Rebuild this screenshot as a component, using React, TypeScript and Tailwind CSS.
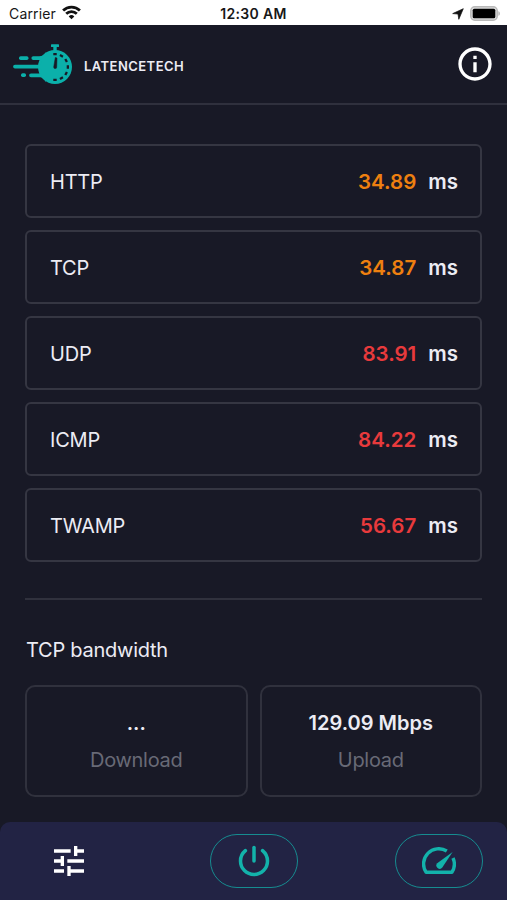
import { MdInfoOutline, MdTune } from 'react-icons/md'

const protocols = [
  { name: 'HTTP', value: '34.89', color: 'text-[#ee8010]' },
  { name: 'TCP', value: '34.87', color: 'text-[#ee8010]' },
  { name: 'UDP', value: '83.91', color: 'text-[#e83a3c]' },
  { name: 'ICMP', value: '84.22', color: 'text-[#e83a3c]' },
  { name: 'TWAMP', value: '56.67', color: 'text-[#e83a3c]' },
]

const bandwidth = [
  { label: 'Download', value: '...' },
  { label: 'Upload', value: '129.09 Mbps' },
]

function Logo() {
  return (
    <svg width="60" height="42" viewBox="0 0 60 42" fill="none">
      <g fill="#0bb0aa">
        <rect x="38" y="1.2" width="8" height="2.8" rx=".6" />
        <rect x="40.3" y="3" width="3.4" height="5" />
        <circle cx="42" cy="24" r="17" />
        <path d="M20.3 13.2H26c3.5 0 5-1.5 7-4v30c-2-3.500-3.500-5-7-5h-8a1.900 1.900 0 0 1 0-3.800h8.500c2.500 0 2.500-4.900 0-4.900H2a1.900 1.900 0 0 1 0-3.800h24.500c2.500 0 2.500-4.700 0-4.700h-6.200a1.900 1.900 0 0 1 0-3.800z" />
        <rect x="6" y="13.2" width="9.5" height="3.8" rx="1.7" />
        <rect x="8" y="30.2" width="5" height="3.8" rx="1.7" />
      </g>
      <path d="M42.300 14.500l1.700.5-.3 9.200a1.500 1.500 0 0 1-3-.2z" fill="#181926" stroke="#181926" strokeWidth=".5" />
      <path
        d="M42 10v2.300M49 11.900l-1.100 2M54.100 17l-2 1.100M56 24h-2.300M54.100 31l-2-1.100M49 36.100l-1.100-2M42 38v-2.300"
        stroke="#181926"
        strokeWidth="3.4"
      />
    </svg>
  )
}

function StatusBar() {
  return (
    <div className="grid h-[25px] grid-cols-3 items-center bg-white text-[#171717]">
      <div className="flex items-center gap-[6px] pl-[9px]">
        <span className="pt-[2px] text-[14px] leading-none tracking-[0.15px]">Carrier</span>
        <svg width="19" height="15" viewBox="0 0 19 15" fill="none" stroke="#111" strokeWidth="2.8">
          <path d="M1.1 5.500a12 12 0 0 1 16.800 0" />
          <path d="M4.200 8.800a7.500 7.500 0 0 1 10.600 0" />
          <path d="M9.500 14.300l-2.800-2.900a4 4 0 0 1 5.600 0z" fill="#111" stroke="none" />
        </svg>
      </div>
      <div className="pt-[2px] text-center text-[14px] leading-none font-semibold tracking-[0.3px]">12:30 AM</div>
      <div className="flex items-center justify-end gap-[6px] pt-[2px] pr-[6px]">
        <svg width="12" height="12" viewBox="0 0 12 12" fill="#111" stroke="#111" strokeWidth=".7" strokeLinejoin="round">
          <path d="M11.300.7L6.800 11.300 6 6 .7 5.600z" />
        </svg>
        <svg width="31" height="15" viewBox="0 0 31 15">
          <rect x=".8" y=".8" width="26.4" height="13.4" rx="4" fill="#ddd" stroke="#b9b9b9" strokeWidth="1.5" />
          <rect x="2.7" y="2.7" width="22.6" height="9.6" rx="1.6" fill="#000" />
          <path d="M28.400 5.200c2 .6 2 4 0 4.600z" fill="#b5b5b5" />
        </svg>
      </div>
    </div>
  )
}

function PowerIcon() {
  return (
    <svg width="36" height="36" viewBox="0 0 512 512" fill="none" stroke="#13b2aa" strokeWidth="50" strokeLinecap="round">
      <path d="M378 108a191.41 191.41 0 0 1 70 148c0 106-86 192-192 192S64 362 64 256a192 192 0 0 1 69-148" />
      <path d="M256 64v192" />
    </svg>
  )
}

function GaugeIcon() {
  return (
    <svg width="34" height="28" viewBox="0 0 34 28" fill="none">
      <path
        d="M24.800 4A15.200 15.200 0 0 0 4.100 25.300H29.900A15.200 15.200 0 0 0 31 11"
        stroke="#13b2aa"
        strokeWidth="3.4"
        strokeLinejoin="round"
      />
      <path d="M30.600 4.900L20.300 20.500a3.300 3.300 0 0 1-5.100-4.300z" fill="#13b2aa" />
    </svg>
  )
}

export default function App() {
  return (
    <div className="flex h-[900px] w-[507px] flex-col overflow-hidden bg-[#181926] font-['Inter',sans-serif] text-[#ececf4]">
      <StatusBar />
      <header className="flex h-20 items-center justify-between border-b-2 border-[#2f303d] pr-[12px] pl-[13px]">
        <div className="flex items-center">
          <Logo />
          <span className="ml-[11px] pt-[5px] text-[13px] leading-none font-semibold tracking-[0.45px]">LATENCETECH</span>
        </div>
        <MdInfoOutline size={40} className="text-white" />
      </header>

      <main className="flex flex-1 flex-col px-[25px] pt-[39px]">
        <div className="flex flex-col gap-3">
          {protocols.map((item) => (
            <div
              key={item.name}
              className="flex h-[74px] items-center justify-between rounded-md border-2 border-[#353642] pt-[2px] pr-[22px] pl-[23px]"
            >
              <span className="text-[20px] tracking-[-0.2px]">{item.name}</span>
              <div className="flex items-center gap-[12px] text-[20.5px] font-semibold">
                <span className={item.color}>{item.value}</span>
                <span>ms</span>
              </div>
            </div>
          ))}
        </div>

        <hr className="mt-9 border-t-2 border-[#30313d]" />

        <h2 className="mt-[36px] pl-px text-[20px] leading-7 tracking-[-0.25px]">TCP bandwidth</h2>
        <div className="mt-[21px] grid grid-cols-2 gap-3">
          {bandwidth.map((item) => (
            <div
              key={item.label}
              className="flex h-[112px] flex-col items-center justify-center rounded-[10px] border-2 border-[#30313d] pt-[2px]"
            >
              <span className="text-[20px] leading-[37px] font-semibold">{item.value}</span>
              <span className="text-[20px] leading-[37px] tracking-[-0.3px] text-[#686a76]">{item.label}</span>
            </div>
          ))}
        </div>
      </main>

      <nav className="flex h-[78px] items-center justify-between rounded-t-[10px] bg-[#222344] pr-[24px] pl-[25px]">
        <div className="flex h-[54px] w-[88px] items-center justify-center text-white">
          <MdTune size={40} />
        </div>
        <button className="flex h-[54px] w-[88px] items-center justify-center rounded-full border-[1.5px] border-[#168c90]">
          <PowerIcon />
        </button>
        <button className="flex h-[54px] w-[88px] items-center justify-center rounded-full border-[1.5px] border-[#168c90]">
          <GaugeIcon />
        </button>
      </nav>
    </div>
  )
}
